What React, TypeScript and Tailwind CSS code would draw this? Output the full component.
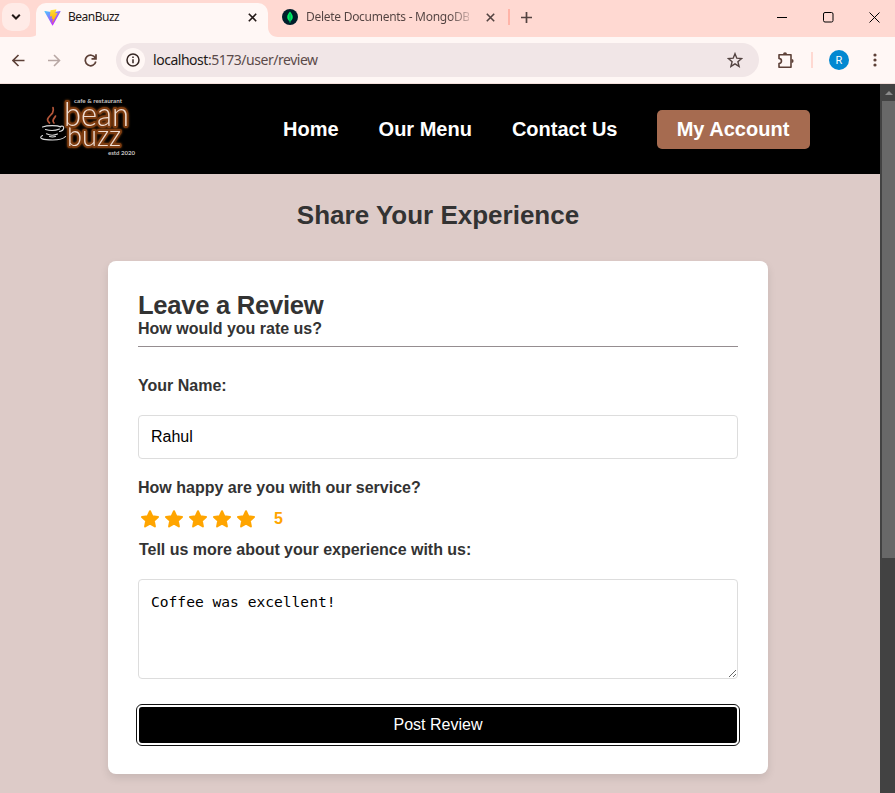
import React from "react";

const uiFont = "font-['Noto_Sans','Open_Sans',sans-serif]";

function ViteLogo() {
  return (
    <svg className="h-[17px] w-[17px]" viewBox="0 0 410 404">
      <defs>
        <linearGradient id="vt" x1="6" y1="33" x2="235" y2="344" gradientUnits="userSpaceOnUse">
          <stop stopColor="#41D1FF" />
          <stop offset="1" stopColor="#BD34FE" />
        </linearGradient>
        <linearGradient id="vb" x1="194" y1="8" x2="236" y2="292" gradientUnits="userSpaceOnUse">
          <stop stopColor="#FFEA83" />
          <stop offset=".083" stopColor="#FFDD35" />
          <stop offset="1" stopColor="#FFA800" />
        </linearGradient>
      </defs>
      <path fill="url(#vt)" d="M399.641 59.525 215.643 388.545c-3.799 6.793-13.559 6.833-17.415.073L10.582 59.556C6.38 52.19 12.68 43.267 21.028 44.76l184.195 32.923c1.175.21 2.378.208 3.553-.006l180.343-32.87c8.32-1.517 14.649 7.337 10.522 14.719Z" />
      <path fill="url(#vb)" d="M292.965 1.574 156.801 28.255a5 5 0 0 0-4.03 4.611l-8.376 141.464c-.197 3.332 2.863 5.918 6.115 5.168l37.91-8.749c3.547-.818 6.752 2.306 6.023 5.873l-11.263 55.153c-.758 3.712 2.727 6.886 6.352 5.785l23.415-7.114c3.63-1.102 7.118 2.081 6.35 5.796l-17.899 86.633c-1.12 5.419 6.088 8.374 9.094 3.728l2.008-3.103 110.954-221.428c1.858-3.707-1.346-7.935-5.418-7.15l-39.022 7.532c-3.667.707-6.787-2.708-5.752-6.296l25.469-88.291c1.036-3.594-2.095-7.012-5.766-6.293Z" />
    </svg>
  );
}

function MongoLogo() {
  return (
    <svg className="h-4 w-4" viewBox="0 0 16 16">
      <circle cx="8" cy="8" r="8" fill="#001e2b" />
      <path d="M8 2.4C9.4 4.2 10.8 5.7 10.8 8.1c0 2-1.1 3.4-2.3 4.2L8.2 14h-.4l-.3-1.7C6.300 11.500 5.200 10.100 5.200 8.100 5.200 5.700 6.600 4.200 8 2.400Z" fill="#00ed64" />
      <path d="M8 5v7" stroke="#00a35c" strokeWidth="1" />
    </svg>
  );
}

function Cross({ color }: { color: string }) {
  return (
    <svg className="h-[9px] w-[9px]" viewBox="0 0 9 9" stroke={color} strokeWidth="1.600">
      <path d="M.8.8l7.400 7.400M8.200.8L.8 8.200" />
    </svg>
  );
}

function TabStrip() {
  return (
    <div className="flex h-[37px] bg-[#ffd9d2]">
      <div className="ml-[2px] mt-[3px] flex h-7 w-7 items-center justify-center rounded-[10px] bg-[#ffebe7]">
        <svg className="h-[6px] w-[10px]" viewBox="0 0 10 6" fill="none" stroke="#231917" strokeWidth="2">
          <path d="M1.200.8L5 4.500 8.800.8" />
        </svg>
      </div>
      <div className="mt-[3px] flex h-[34px] w-[248px]">
        <Flare />
        <div className="-ml-[4px] flex h-[34px] w-[232px] shrink-0 items-center rounded-t-[10px] bg-[#fff7f5] pb-[6px] pl-2">
          <ViteLogo />
          <span className="ml-[7px] w-[180px] text-[12px] leading-4 tracking-[-0.5px] text-[#231917]">BeanBuzz</span>
          <Cross color="#231917" />
        </div>
        <Flare right />
      </div>
      <div className="ml-[4px] flex h-[34px] items-center">
        <MongoLogo />
        <span className="ml-2 w-[163px] whitespace-nowrap bg-[linear-gradient(90deg,#534341_88%,#53434140)] bg-clip-text text-[12px] leading-4 tracking-[-0.28px] text-transparent">
          Delete Documents - MongoDB
        </span>
        <span className="ml-[17px]"><Cross color="#534341" /></span>
        <span className="ml-[13px] h-4 w-[2px] bg-[#ffb4a8]" />
        <svg className="ml-[11px] h-[11px] w-[11px]" viewBox="0 0 11 11" stroke="#534341" strokeWidth="1.700">
          <path d="M5.500 0v11M0 5.500h11" />
        </svg>
      </div>
      <div className="ml-auto mr-[15px] flex h-[34px] items-center gap-[35px]">
        <svg className="h-[11px] w-[11px]" viewBox="0 0 11 11"><path d="M0 5.500h10" stroke="#000" /></svg>
        <svg className="h-[11px] w-[11px]" viewBox="0 0 11 11" fill="none" stroke="#000"><rect x=".5" y=".5" width="9.500" height="9.500" rx="1.500" /></svg>
        <svg className="h-[11px] w-[11px]" viewBox="0 0 11 11" stroke="#000"><path d="M.5.5l10 10M10.500.5l-10 10" /></svg>
      </div>
    </div>
  );
}

function Flare({ right = false }: { right?: boolean }) {
  return (
    <svg className={right ? "h-[10px] w-[10px] shrink-0 self-end -scale-x-100" : "h-[10px] w-[10px] shrink-0 self-end"} viewBox="0 0 10 10">
      <path d="M10 0v10H0C6 10 10 6 10 0Z" fill="#fff7f5" />
    </svg>
  );
}

function Toolbar() {
  return (
    <div className="flex h-[47px] items-center border-b border-[#f3dfdb] bg-[#fff7f5]">
      <svg className="ml-3 h-[13px] w-[13px]" viewBox="0 0 13 13" fill="none" stroke="#5d4037" strokeWidth="1.600">
        <path d="M12.500 6.500H1M6.500 1L1 6.500 6.500 12" />
      </svg>
      <svg className="ml-[23px] h-[13px] w-[13px]" viewBox="0 0 13 13" fill="none" stroke="#b8a7a4" strokeWidth="1.600">
        <path d="M0 6.500h11.500M6 1l5.500 5.500L6 12" />
      </svg>
      <svg className="ml-[23px] h-[13px] w-[13px]" viewBox="0 0 13 13" fill="none" stroke="#5d4037" strokeWidth="1.700">
        <path d="M11.300 4A5.300 5.300 0 1 0 11.800 7.500M12 .3v4.500H7.500" />
      </svg>
      <div className="ml-[19px] flex h-[34px] w-[643px] items-center rounded-full bg-[#f1e6e7] pl-[5px] pr-[16px]">
        <div className="flex h-6 w-6 items-center justify-center rounded-full bg-[#fff7f5]">
          <svg className="h-[14px] w-[14px]" viewBox="0 0 14 14" fill="none" stroke="#362724" strokeWidth="1.500">
            <circle cx="7" cy="7" r="6" />
            <path d="M7 6.200v4M7 3.500v1.500" />
          </svg>
        </div>
        <span className="ml-2 text-[14px] leading-5 tracking-[-0.47px] text-[#5b4a49]">
          <span className="text-[#231917]">localhost</span>:5173/user/review
        </span>
        <svg className="ml-auto h-4 w-4" viewBox="0 0 16 16" fill="none" stroke="#534341" strokeWidth="1.400">
          <path d="M8 1.700l1.800 4.500 4.800.4-3.700 3.100 1.200 4.700L8 11.900l-4.100 2.500 1.200-4.700L1.400 6.600l4.800-.4L8 1.700Z" />
        </svg>
      </div>
      <svg className="ml-[18px] h-[17px] w-[17px]" viewBox="0 0 17 17" fill="none" stroke="#5d4037" strokeWidth="1.600">
        <path d="M2 2.800H14v12.400H2V11.600c3.300-.5 3.300-4.700 0-5.200Z" strokeLinejoin="round" />
        <path d="M6 2.200a2 2 0 0 1 4 0ZM14.600 7a2 2 0 0 1 0 4Z" fill="#5d4037" stroke="none" />
      </svg>
      <span className="ml-[17px] h-4 w-[2px] bg-[#ffd9d2]" />
      <div className="ml-4 flex h-5 w-5 items-center justify-center rounded-full bg-[#0288d1] text-[11px] leading-none text-white font-['Roboto',sans-serif]">R</div>
      <svg className="ml-6 h-[14px] w-[4px]" viewBox="0 0 4 14" fill="#5d4037">
        <circle cx="2" cy="2" r="1.600" /><circle cx="2" cy="7" r="1.600" /><circle cx="2" cy="12" r="1.600" />
      </svg>
    </div>
  );
}

function BeanBuzzLogo() {
  return (
    <svg className="h-[70px] w-[110px]" viewBox="0 0 110 70">
      <g fontFamily="Lato, sans-serif">
        <g
          className="[filter:drop-shadow(0_0_1px_#8a430f)] [paint-order:stroke]"
          fill="#f0ddd2"
          stroke="#7d3c10"
          strokeWidth="4"
          strokeLinejoin="round"
          fontWeight="300"
        >
          <text x="35" y="51.500" fontSize="29" textLength="54" lengthAdjust="spacingAndGlyphs">buzz</text>
          <text x="32" y="31.500" fontSize="33" textLength="65" lengthAdjust="spacingAndGlyphs">bean</text>
        </g>
        <g fill="#c8c4c2">
          <text x="42" y="8.500" fontSize="6" textLength="48" lengthAdjust="spacingAndGlyphs">cafe &amp; restaurant</text>
          <text x="76" y="60.500" fontSize="6" textLength="27" lengthAdjust="spacingAndGlyphs">estd 2020</text>
        </g>
      </g>
      <g fill="none" strokeLinecap="round" transform="translate(-1.500 -2)">
        <path d="M19 31c-5-4 1-7 3-10 1-2 1-4 .5-5.500M23.500 31c-3-3 1-5 1.500-7" stroke="#b5573a" strokeWidth="1.700" />
        <g stroke="#ddd" strokeWidth="1.100">
          <path d="M12 35c5-1.800 15-1.800 18 0M15 37.500c4 1.200 10 1.200 14-.5M29.500 34.500c5-2 5 4-.5 5" />
          <path d="M16 41.800c4 2 8 1.500 11 .2M19 44.500c2 .6 4 .6 6 0M12 43.500c-5 3 1 4.500 10 4.500 6 0 11-1.200 13-3.500" />
        </g>
      </g>
    </svg>
  );
}

function NavBar() {
  return (
    <header className="flex h-[90px] items-center bg-black pl-[32px] text-[20px] font-bold leading-[23px] text-white">
      <BeanBuzzLogo />
      <nav className="ml-[141px] flex items-center gap-10 whitespace-nowrap">
        <a>Home</a>
        <a>Our Menu</a>
        <a>Contact Us</a>
        <button className="-ml-px h-[39px] w-[153px] rounded-[5px] bg-[#a66b50] text-center">My Account</button>
      </nav>
    </header>
  );
}

function Star() {
  return (
    <svg className="h-6 w-6" viewBox="0 0 24 24" fill="orange" stroke="orange" strokeWidth="2" strokeLinejoin="round">
      <path d="M12 4.200l2.300 5 5.700.7-4.200 3.900 1.100 5.600L12 16.700l-4.900 2.700 1.100-5.600L4 9.900l5.700-.7L12 4.200Z" />
    </svg>
  );
}

function ReviewForm() {
  return (
    <form className="mx-auto mt-[30px] h-[513px] w-[660px] rounded-lg bg-white px-[30px] pt-[30px] text-[16px] font-bold leading-[18px] text-[#333] shadow-[0_4px_8px_rgba(0,0,0,0.1)]">
      <h2 className="text-[25.600px] leading-[29px] tracking-[-0.27px]">Leave a Review</h2>
      <p>How would you rate us?</p>
      <hr className="mt-[8px] border-[#958d90]" />
      <label className="mt-[30px] block">Your Name:</label>
      <input defaultValue="Rahul" className="mt-[20px] block h-11 w-full rounded-[4px] border border-[#ddd] px-3 pb-[1px] font-normal text-black outline-none" />
      <p className="mt-[20px]">How happy are you with our service?</p>
      <div className="mt-[10px] flex h-6 items-center">
        {[1, 2, 3, 4, 5].map((n) => <Star key={n} />)}
        <span className="ml-4 text-[orange]">5</span>
      </div>
      <label className="ml-px mt-[10px] block tracking-[-0.02px]">Tell us more about your experience with us:</label>
      <textarea
        defaultValue="Coffee was excellent!"
        className="mt-[20px] block h-[100px] w-full resize rounded-[4px] border border-[#ddd] px-3 py-[12px] font-['DejaVu_Sans_Mono',monospace] text-[14.600px] font-normal leading-[19px] text-black outline-none"
      />
      <button type="button" className="ml-px mt-[28px] block h-9 w-[598px] rounded-[3px] bg-black font-normal text-white outline-1 outline-offset-2 outline-[#101010]">
        Post Review
      </button>
    </form>
  );
}

function Scrollbar() {
  return (
    <div className="flex w-[15px] flex-col items-end bg-[#424242]">
      <div className="flex h-[17px] w-full items-center justify-center pl-[2px]">
        <svg className="h-[4px] w-[8px]" viewBox="0 0 8 4"><path d="M4 0l4 4H0Z" fill="#8a8a8a" /></svg>
      </div>
      <div className="h-[457px] w-[13px] bg-[#686868]" />
    </div>
  );
}

export default function App() {
  return (
    <div className="flex h-[793px] w-[895px] flex-col overflow-hidden">
      <div className={uiFont}>
        <TabStrip />
        <Toolbar />
      </div>
      <div className="flex flex-1 font-['Liberation_Sans',Arial,sans-serif]">
        <div className="w-[880px] bg-[#ddcbc8]">
          <NavBar />
          <main className="pr-1">
            <h1 className="mt-[26px] text-center text-[26px] font-bold leading-[31px] text-[#333]">Share Your Experience</h1>
            <ReviewForm />
          </main>
        </div>
        <Scrollbar />
      </div>
    </div>
  );
}
